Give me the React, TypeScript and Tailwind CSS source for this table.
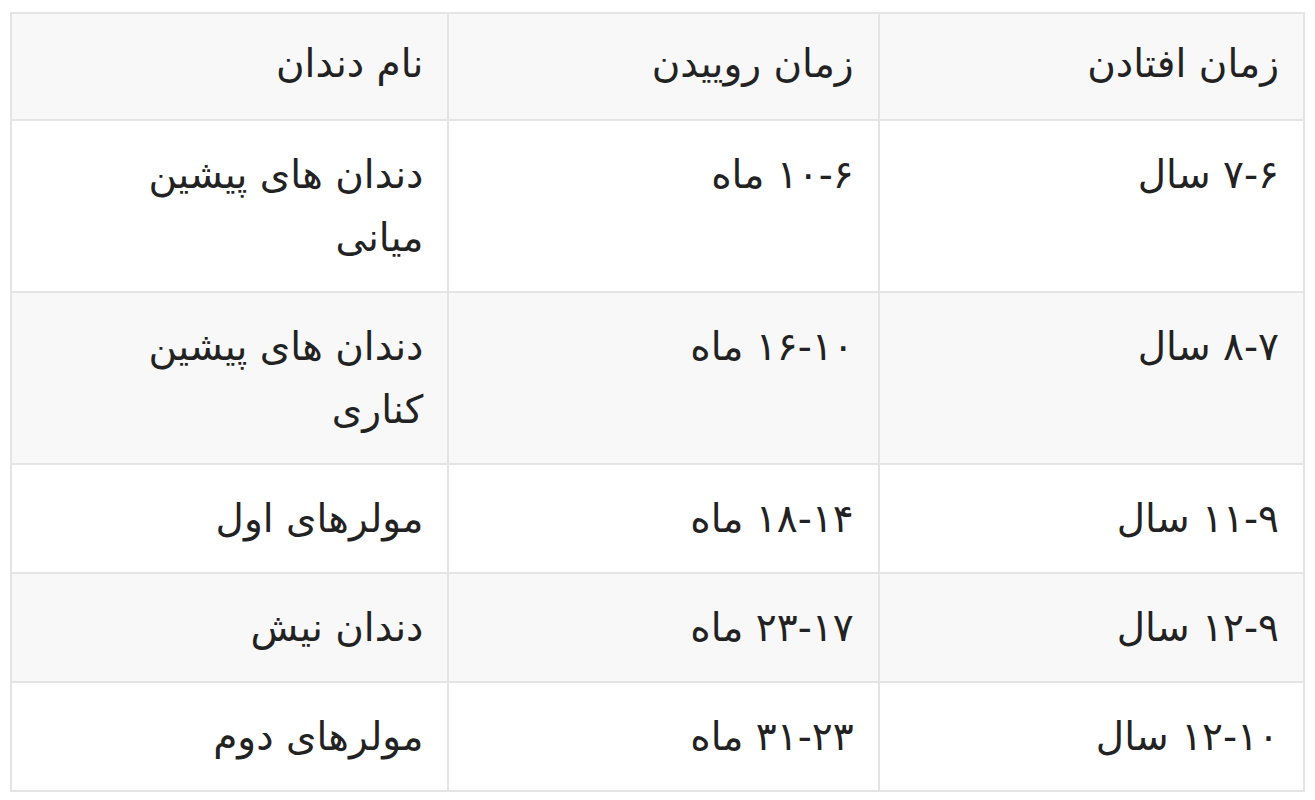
export default function App() {
  const rows = [
    { fall: "۷-۶ سال", grow: "۱۰-۶ ماه", name: ["دندان های پیشین", "میانی"] },
    { fall: "۸-۷ سال", grow: "۱۶-۱۰ ماه", name: ["دندان های پیشین", "کناری"] },
    { fall: "۱۱-۹ سال", grow: "۱۸-۱۴ ماه", name: ["مولرهای اول"] },
    { fall: "۱۲-۹ سال", grow: "۲۳-۱۷ ماه", name: ["دندان نیش"] },
    { fall: "۱۲-۱۰ سال", grow: "۳۱-۲۳ ماه", name: ["مولرهای دوم"] },
  ]

  const base = "border-2 border-[#e4e4e4] align-top text-right px-[24px] leading-[63px]"
  const head = base + " pt-[18px] pb-[24px] font-normal"
  const cell = base + " py-[22px]"

  return (
    <div className="min-h-screen bg-white pt-[12px] pl-[10px]" style={{ fontFamily: '"DejaVu Sans", sans-serif' }}>
      <table dir="rtl" className="w-[1295px] border-collapse text-[39px] text-[#222]">
        <colgroup>
          <col className="w-[426px]" />
          <col className="w-[431px]" />
          <col className="w-[438px]" />
        </colgroup>
        <thead>
          <tr className="bg-[#f8f8f8]">
            <th className={head}>زمان افتادن</th>
            <th className={head}>زمان روییدن</th>
            <th className={head}>نام دندان</th>
          </tr>
        </thead>
        <tbody>
          {rows.map((r, i) => (
            <tr key={i} className={i % 2 === 1 ? "bg-[#f8f8f8]" : "bg-white"}>
              <td className={cell}>{r.fall}</td>
              <td className={cell}>{r.grow}</td>
              <td className={cell}>
                {r.name.map((line, j) => (
                  <div key={j}>{line}</div>
                ))}
              </td>
            </tr>
          ))}
        </tbody>
      </table>
    </div>
  )
}
